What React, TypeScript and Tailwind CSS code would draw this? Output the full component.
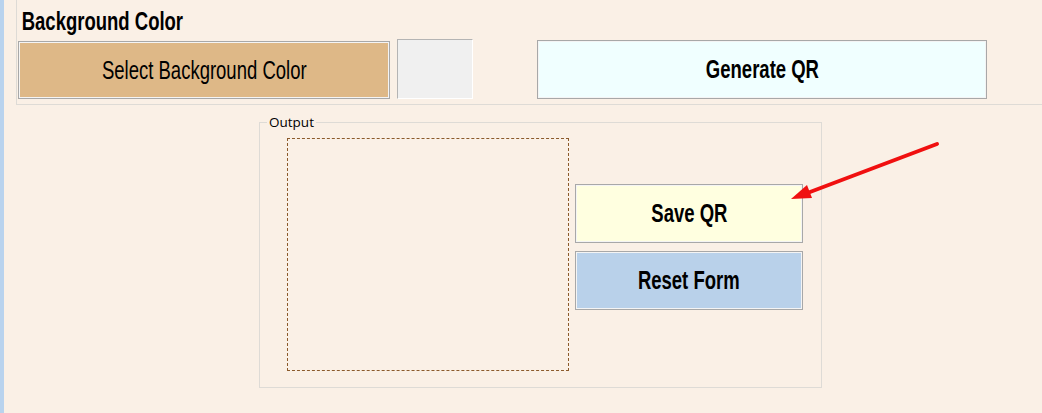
import React from "react";

const narrow = { fontFamily: '"Liberation Sans", Arial, sans-serif' };

// Agency-style condensed lettering: squeeze Liberation Sans horizontally
function Squeezed({ children, bold = true }: { children: React.ReactNode; bold?: boolean }) {
  return (
    <span
      style={narrow}
      className={`inline-block origin-center scale-x-[0.74] whitespace-nowrap text-[25px] leading-none text-black ${bold ? "font-bold" : "font-normal"}`}
    >
      {children}
    </span>
  );
}

function WinButton({ label, className, bold = true }: { label: string; className: string; bold?: boolean }) {
  return (
    <button
      type="button"
      className={`flex items-center justify-center overflow-hidden border border-[#a8a8a8] shadow-[inset_0_0_0_1px_#f4f4f4] ${className}`}
    >
      <Squeezed bold={bold}>{label}</Squeezed>
    </button>
  );
}

export default function App() {
  return (
    <div className="flex h-[413px] w-[1042px] overflow-hidden bg-[#faf0e6]">
      <div className="w-[4px] shrink-0 bg-[#b9d3ee]" />
      <div className="relative flex-1">
        <div className="ml-[12px] h-[105px] border-b border-l border-[#dedbd6] pl-[1px]">
          <h1 style={narrow} className="origin-left scale-x-[0.74] pl-[5px] pt-[8px] text-[25px] font-bold leading-[26px] text-black">
            Background Color
          </h1>
          <div className="mt-[5px] flex items-start">
            <WinButton label="Select Background Color" bold={false} className="mt-[2px] h-[58px] w-[372px] bg-[#deb887]" />
            <div className="ml-[7px] h-[60px] w-[76px] border border-[#b4b4b4] border-b-white border-r-white bg-[#f0f0f0]" />
            <WinButton label="Generate QR" className="ml-[64px] mt-[1px] h-[59px] w-[450px] bg-[#f0ffff]" />
          </div>
        </div>

        <fieldset className="ml-[255px] mt-[10px] h-[273px] w-[563px] min-w-0 border border-[#dedbd6]">
          <legend className="ml-[7px] px-[2px] text-[13.5px] leading-[14px] text-black" style={{ fontFamily: '"Open Sans", "Noto Sans", sans-serif' }}>
            Output
          </legend>
          <div className="mt-[9px] flex items-start pl-[27px]">
            <div className="h-[233px] w-[282px] shrink-0 border border-dashed border-[#8b5a2b]" />
            <div className="ml-[6px] mt-[46px] flex flex-col gap-[8px]">
              <WinButton label="Save QR" className="h-[59px] w-[228px] bg-[#ffffe0]" />
              <WinButton label="Reset Form" className="h-[59px] w-[228px] bg-[#b9d1ea]" />
            </div>
          </div>
        </fieldset>

        <svg className="pointer-events-none absolute left-0 top-0" width="1038" height="413">
          <line x1="933" y1="144" x2="806" y2="192" stroke="#f01010" strokeWidth="4" strokeLinecap="round" />
          <polygon points="787,199 803,185 808,198" fill="#f01010" />
        </svg>
      </div>
    </div>
  );
}
